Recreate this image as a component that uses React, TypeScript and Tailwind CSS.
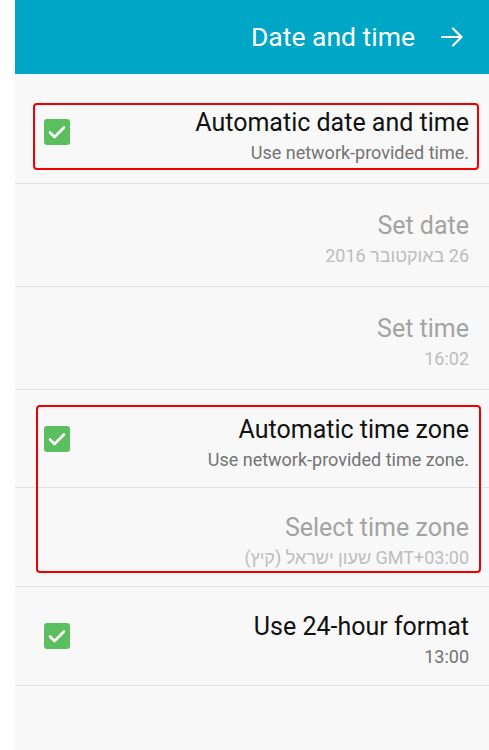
import React from "react";

type Row = {
  title: string;
  subtitle: string;
  checked?: boolean;
  disabled?: boolean;
  rtlSub?: boolean;
  height: string;
};

const rows: Row[] = [
  { title: "Automatic date and time", subtitle: "Use network-provided time.", checked: true, height: "h-[103px]" },
  { title: "Set date", subtitle: "26 באוקטובר 2016", disabled: true, rtlSub: true, height: "h-[103px]" },
  { title: "Set time", subtitle: "16:02", disabled: true, height: "h-[103px]" },
  { title: "Automatic time zone", subtitle: "Use network-provided time zone.", checked: true, height: "h-[98px]" },
  { title: "Select time zone", subtitle: "GMT+03:00 שעון ישראל (קיץ)", disabled: true, rtlSub: true, height: "h-[99px]" },
  { title: "Use 24-hour format", subtitle: "13:00", checked: true, height: "h-[99px]" },
];

function Checkbox() {
  return (
    <div className="flex h-[26px] w-[26px] items-center justify-center rounded-[3px] bg-[#5bbf5f]">
      <svg width="18" height="14" viewBox="0 0 18 14" fill="none">
        <path d="M2 7.5 L6.5 12 L16 2.5" stroke="white" strokeWidth="2.6" strokeLinecap="round" strokeLinejoin="round" />
      </svg>
    </div>
  );
}

function SettingRow({ row }: { row: Row }) {
  return (
    <div className={`flex items-center border-b border-[#e2e2e2] pl-[29px] pr-[20px] ${row.height}`}>
      <div className="w-[26px]">{row.checked && <Checkbox />}</div>
      <div className="flex flex-1 flex-col items-end pt-[10px]">
        <span
          className={`text-[25px] leading-[31px] ${
            row.disabled ? "text-[#a3a3a3]" : "text-[#111111]"
          }`}
        >
          {row.title}
        </span>
        <span
          dir={row.rtlSub ? "rtl" : undefined}
          className={`text-[18px] leading-[29px] ${
            row.disabled ? "text-[#bdbdbd]" : "text-[#737373]"
          }`}
        >
          {row.subtitle}
        </span>
      </div>
    </div>
  );
}

export default function App() {
  return (
    <div
      className="flex h-[750px] w-[489px] bg-white"
      style={{ fontFamily: 'Roboto, "Liberation Sans", "DejaVu Sans", sans-serif' }}
    >
      <div className="w-[15px] bg-white" />
      <div className="relative flex flex-1 flex-col bg-[#f8f8f8]">
        <div className="flex h-[74px] items-center justify-end gap-[26px] bg-[#00a6c5] pr-[26px]">
          <span className="text-[26.5px] text-white">Date and time</span>
          <svg width="22" height="20" viewBox="0 0 22 20" fill="none">
            <path d="M1 10 H20.5 M12 1.5 L20.5 10 L12 18.5" stroke="white" strokeWidth="2.2" strokeLinecap="round" strokeLinejoin="round" />
          </svg>
        </div>
        <div className="h-[7px]" />
        {rows.map((row) => (
          <SettingRow key={row.title} row={row} />
        ))}

        <div className="pointer-events-none absolute left-[18px] top-[103px] h-[67px] w-[446px] rounded-[4px] border-2 border-[#f00000]" />
        <div className="pointer-events-none absolute left-[21px] top-[405px] h-[168px] w-[445px] rounded-[4px] border-2 border-[#f00000]" />
      </div>
    </div>
  );
}
